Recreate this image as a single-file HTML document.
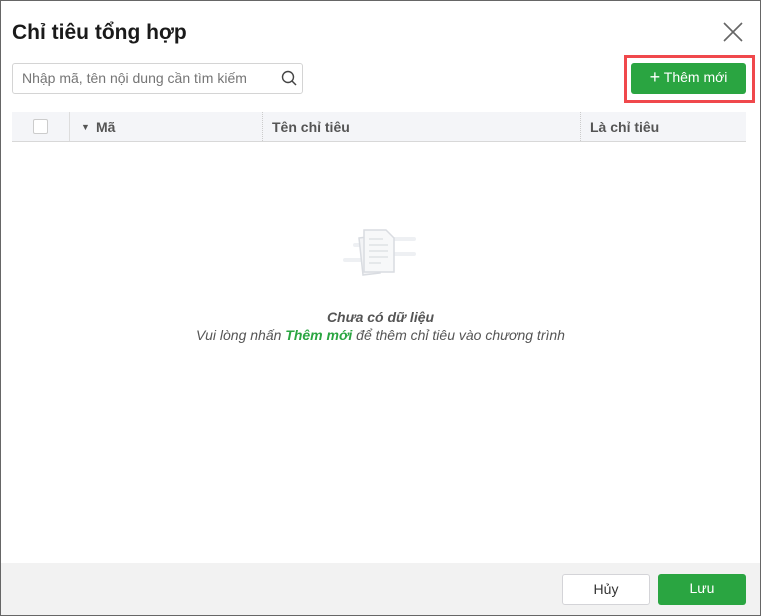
<!DOCTYPE html>
<html><head><meta charset="utf-8"><style>
*{box-sizing:border-box;margin:0;padding:0}
body{width:761px;height:616px;font-family:"Liberation Sans",Arial,sans-serif;background:#fff;position:relative;overflow:hidden}
.frame{position:absolute;left:0;top:0;width:761px;height:616px;border:1px solid #666;}
.abs{position:absolute}
.title{left:12px;top:21px;font-size:21px;font-weight:bold;color:#1a1a1a}
.search{left:12px;top:63px;width:291px;height:31px;border:1px solid #d4d4d4;border-radius:3px;font-size:14px;color:#757575;padding:6px 9px}
.btn{background:#2aa541;color:#fff;border-radius:3px;font-size:14px;text-align:center}
.hdr{left:12px;top:112px;width:734px;height:30px;background:#f4f5f8;border-bottom:1px solid #d8d8d8;font-size:14px;font-weight:bold;color:#555}
.hdr span{position:absolute;top:7px}
.foot{left:1px;top:563px;width:759px;height:52px;background:#f2f2f2}
</style></head><body>
<div class="frame"></div>
<div class="abs title">Chỉ tiêu tổng hợp</div>
<svg class="abs" style="left:722px;top:21px" width="22" height="22"><path d="M2 2L20 20M20 2L2 20" stroke="#666" stroke-width="1.6"/></svg>
<div class="abs search">Nhập mã, tên nội dung cần tìm kiếm</div>
<svg class="abs" style="left:281px;top:70px" width="16" height="16"><circle cx="7" cy="7" r="5.5" stroke="#444" stroke-width="1.4" fill="none"/><path d="M11 11L15 15" stroke="#444" stroke-width="1.5"/></svg>
<div class="abs" style="left:624px;top:55px;width:131px;height:48px;border:3px solid #f0484c"></div>
<div class="abs btn" style="left:631px;top:63px;width:115px;height:31px;padding-top:6px"><span style="font-size:18px;line-height:16px;vertical-align:-1px">+</span> Thêm mới</div>
<div class="abs hdr">
<div class="abs" style="left:21px;top:7px;width:15px;height:15px;border:1px solid #ccc;background:#fff;border-radius:2px"></div>
<div class="abs" style="left:57px;top:0;width:1px;height:29px;background:#ddd"></div>
<span style="left:69px;font-size:9px;top:10px">▼</span><span style="left:84px">Mã</span>
<div class="abs" style="left:250px;top:0;width:1px;height:29px;border-left:1px dotted #ccc"></div>
<span style="left:260px">Tên chỉ tiêu</span>
<div class="abs" style="left:568px;top:0;width:1px;height:29px;border-left:1px dotted #ccc"></div>
<span style="left:578px">Là chỉ tiêu</span>
</div>
<svg class="abs" style="left:340px;top:228px" width="80" height="50">
<rect x="13" y="15" width="26" height="4" rx="2" fill="#eef0f3"/><rect x="42" y="9" width="34" height="4" rx="2" fill="#eef0f3"/><rect x="50" y="24" width="26" height="4" rx="2" fill="#eef0f3"/><rect x="3" y="30" width="30" height="4" rx="2" fill="#eef0f3"/>
<path d="M19 10l16 -2 5 37 -17 2z" fill="#f3f4f6" stroke="#d9dce1" stroke-width="1.5"/>
<path d="M24 2h22l8 8v34h-30z" fill="#f7f8f9" stroke="#d9dce1" stroke-width="1.5"/>
<path d="M29 11h14M29 17h19M29 23h19M29 29h19M29 35h12" stroke="#dfe2e6" stroke-width="1.5"/>
</svg>
<div class="abs" style="left:0;width:761px;top:308px;text-align:center;font-style:italic;font-size:14px;color:#555;line-height:18px">
<b>Chưa có dữ liệu</b><br>Vui lòng nhấn <b style="color:#2aa541">Thêm mới</b> để thêm chỉ tiêu vào chương trình</div>
<div class="abs foot"></div>
<div class="abs" style="left:562px;top:574px;width:88px;height:31px;background:#fff;border:1px solid #d4d4d8;border-radius:3px;font-size:14px;text-align:center;padding-top:6px;color:#333">Hủy</div>
<div class="abs btn" style="left:658px;top:574px;width:88px;height:31px;padding-top:6px">Lưu</div>
</body></html>
